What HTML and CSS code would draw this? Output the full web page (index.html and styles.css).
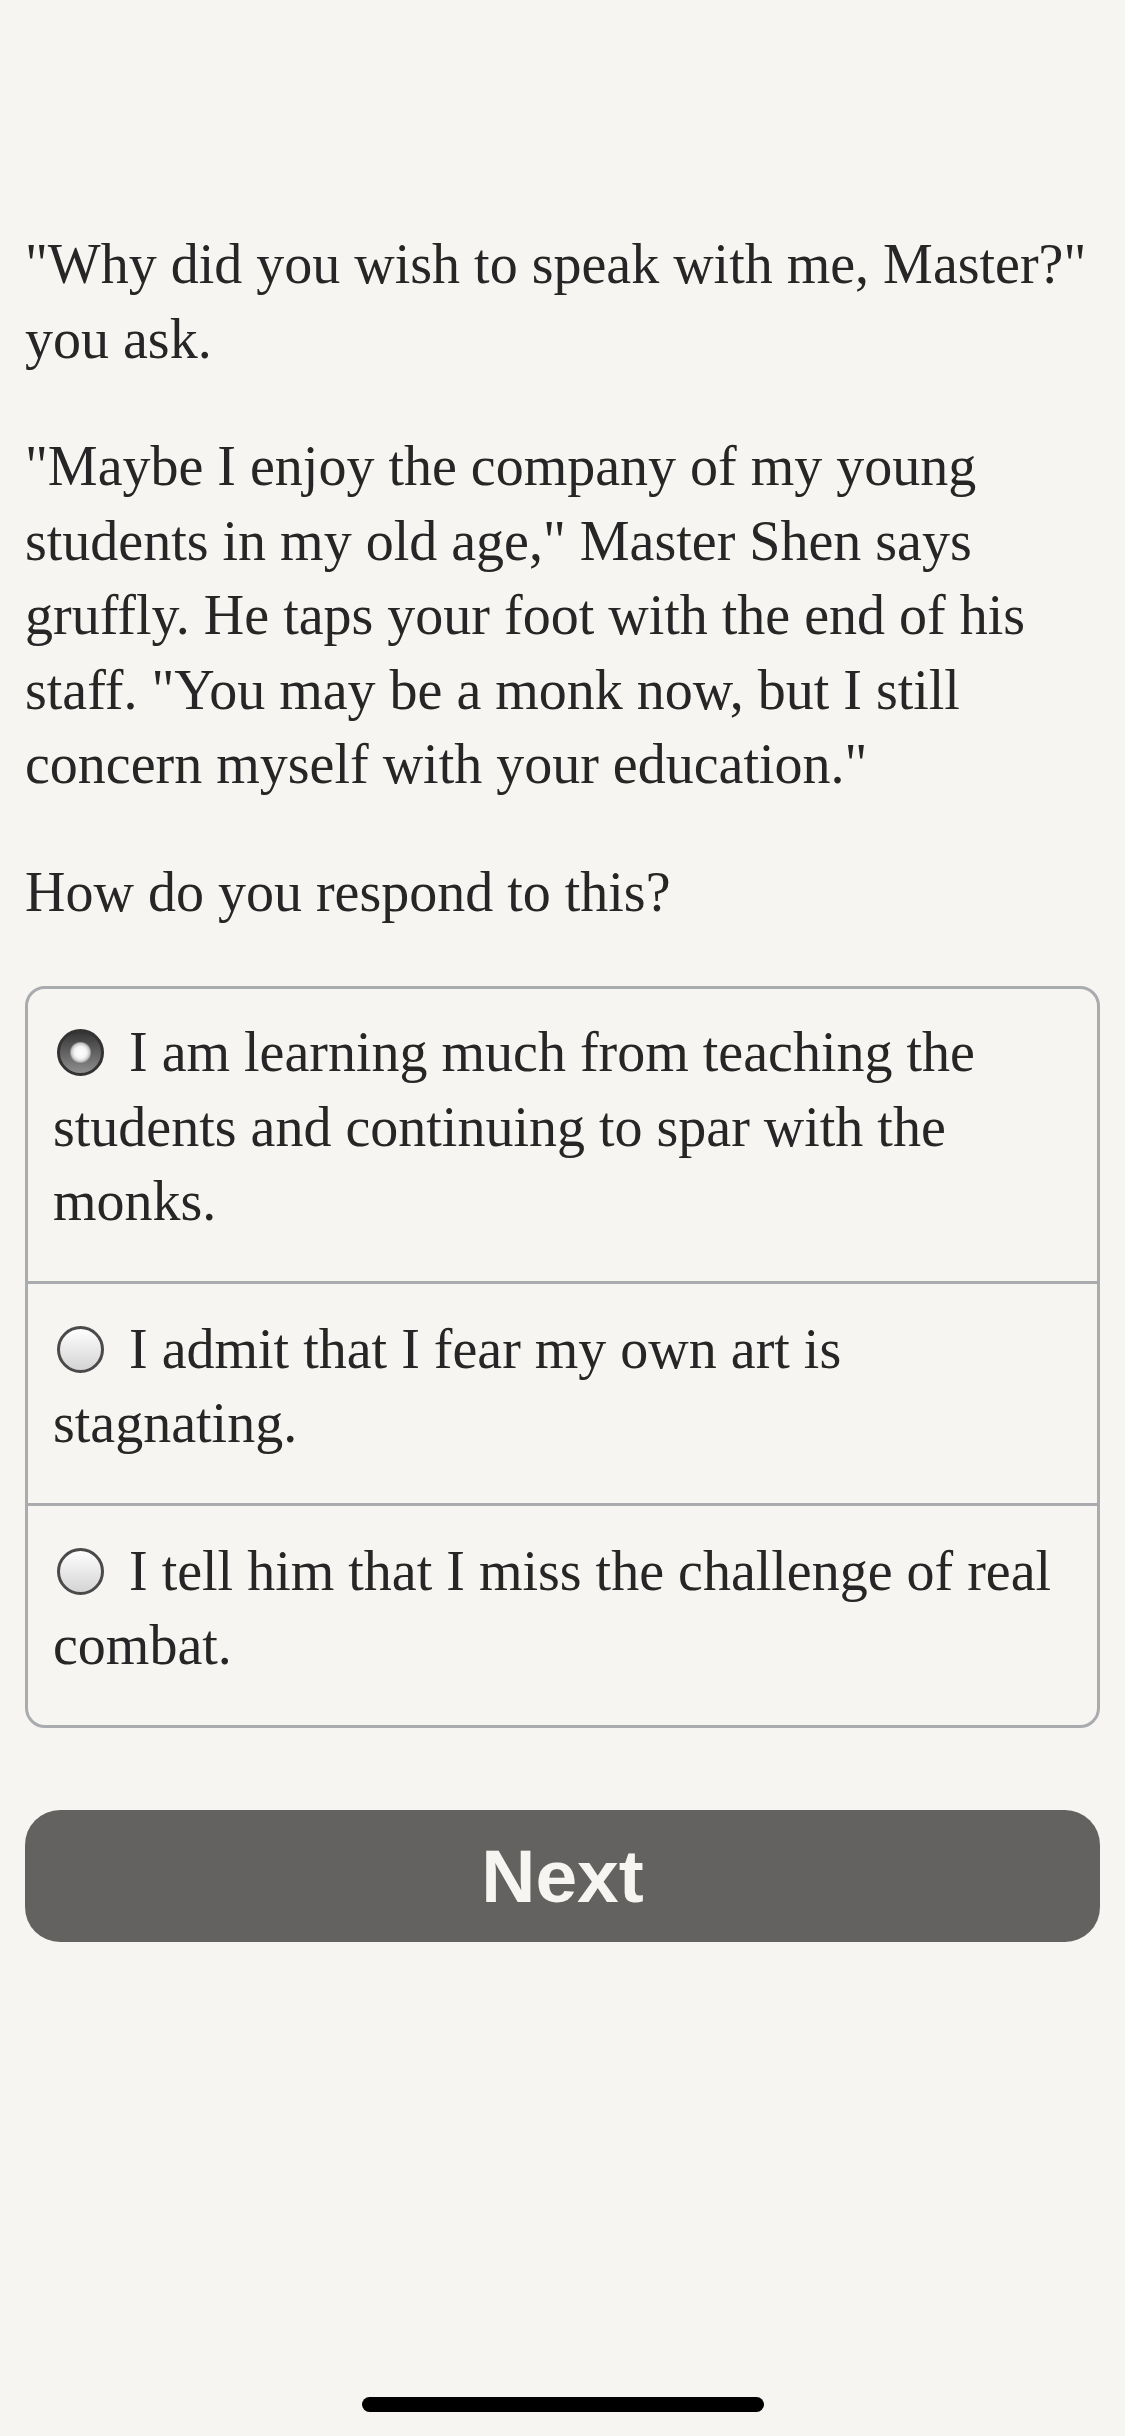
FILE: index.html
```html
<!DOCTYPE html>
<html lang="en">
<head>
  <meta charset="UTF-8">
  <meta name="viewport" content="width=device-width, initial-scale=1.0">
  <title>Master Shen</title>
  <link rel="stylesheet" href="styles.css">
</head>
<body>
  <div class="page">
    <p>"Why did you wish to speak with me, Master?" you ask.</p>
    <p>"Maybe I enjoy the company of my young students in my old age," Master Shen says gruffly. He taps your foot with the end of his staff. "You may be a monk now, but I still concern myself with your education."</p>
    <p class="question">How do you respond to this?</p>

    <div class="choices">
      <label class="choice"><span class="radio checked"></span>I am learning much from teaching the students and continuing to spar with the monks.</label>
      <label class="choice"><span class="radio"></span>I admit that I fear my own art is stagnating.</label>
      <label class="choice"><span class="radio"></span>I tell him that I miss the challenge of real combat.</label>
    </div>

    <button class="next-btn">Next</button>
  </div>

  <div class="home-bar"></div>
</body>
</html>
```

FILE: styles.css
```css
html, body { margin: 0; padding: 0; background: #f7f5f2; }
body { font-family: "Liberation Serif", "Times New Roman", serif; color: #262626; min-height: 2436px; }
.page { padding: 227px 25px 0; font-size: 56px; line-height: 74.5px; }
.page p { margin: 0 0 53px; }
.page p.question { margin-bottom: 57px; }

.choices {
  border: 3px solid #a9abae;
  border-radius: 20px;
}
.choice {
  display: block;
  padding: 28px 25px 42px;
  border-top: 3px solid #a9abae;
}
.choice:first-child { border-top: none; padding-top: 26px; }

.radio {
  display: inline-block;
  box-sizing: border-box;
  width: 47px;
  height: 47px;
  border-radius: 50%;
  border: 3px solid #4a4a4a;
  background: linear-gradient(#fefefe, #d4d4d4);
  vertical-align: -5px;
  margin: 0 25px 0 4px;
}
.radio.checked {
  border-color: #333;
  background:
    radial-gradient(circle, #ffffff 0, #f4f4f4 6px, #c8c8c8 9px, #9a9a9a 10px, transparent 11px),
    linear-gradient(#353535, #8e8e8e);
}

.next-btn {
  display: flex;
  align-items: center;
  justify-content: center;
  width: 100%;
  height: 132px;
  margin-top: 82px;
  border: none;
  border-radius: 35px;
  background: #636260;
  color: #f7f5f2;
  font-family: "Liberation Sans", Arial, sans-serif;
  font-weight: bold;
  font-size: 75px;
  padding: 0;
}

.home-bar {
  position: absolute;
  left: 362px;
  top: 2397px;
  width: 402px;
  height: 15px;
  border-radius: 8px;
  background: #000;
}
```
